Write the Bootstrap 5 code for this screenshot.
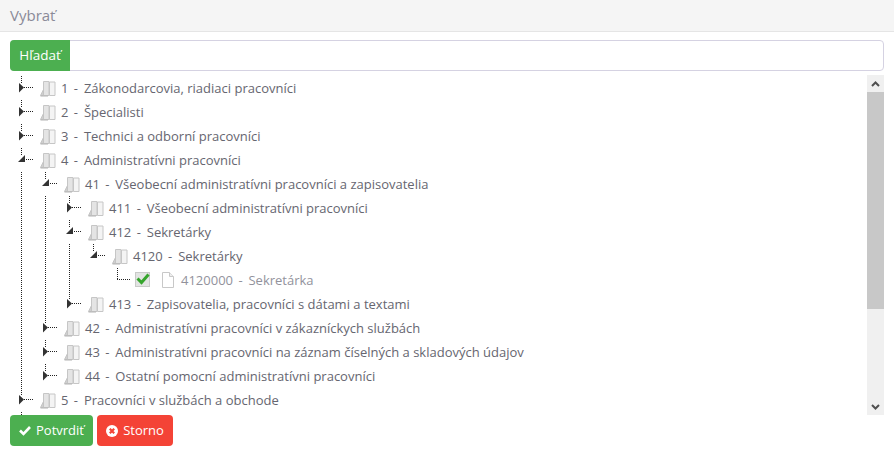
<!DOCTYPE html>
<html lang="sk"><head><meta charset="utf-8"><title>Vybrať</title>
<link href="https://cdn.jsdelivr.net/npm/bootstrap@5.3.0/dist/css/bootstrap.min.css" rel="stylesheet">
<style>
html,body{height:451px;overflow:hidden;background:#fff}
body{font-family:"Open Sans",sans-serif;font-size:13px;color:#666670}
.dlg-head{height:32px;background:#f5f5f5;border-bottom:1px solid #e5e5e5;padding-left:10px;font-size:15px;line-height:30px;color:#8a8a98}
.dlg-body{padding:8px 10px 0}
.srch{height:31px;border:1px solid #d5d2e2;border-radius:4px}
.srch .btn{width:60px;height:31px;margin:-1px 0 0 -1px;border:0;padding:0;background:#4caf50;color:#fff;font-size:13.5px;border-radius:4px 0 0 4px}
.srch input{border:0;outline:0;flex:1;background:transparent;min-width:0}
.tree-wrap{height:340px;margin-top:4px}
.tree-list{height:340px;overflow:hidden;padding-top:1px}
.tr-row{height:24px;line-height:24px;white-space:pre}
.ind{width:24px;flex:none;height:24px}
.ind-on{background:repeating-linear-gradient(#222 0 1px,transparent 1px 2px) 11px 0/1px 100% no-repeat}
.tr-svg{display:block;flex:none}
.ic-book{margin-left:6px;margin-right:5px}
.ic-chk{margin-left:5px;margin-right:10px}
.ic-doc{margin-right:6px}
.lbl-leaf{color:#92929c}
.dash{margin:0 2.5px 0 2px}
.sbar{width:17px;flex:none;background:#f0f0f0;height:340px}
.sbtn{height:17px;display:flex;align-items:center;justify-content:center}
.sthumb{height:217px;background:#c8c8c8}
.sgap{flex:1}
.act{gap:4px;height:31px}
.act .btn{height:31px;padding:0;border:0;font-size:13px;color:#fff;border-radius:4px;display:flex;align-items:center;justify-content:center;gap:5px}
.b-ok{width:83px;background:#4caf50}
.b-no{width:76px;background:#f44336}
</style></head>
<body>
<div class="dlg-head">Vybrať</div>
<div class="dlg-body">
<div class="srch d-flex"><button type="button" class="btn">Hľadať</button><input type="text" aria-label="Hľadať"></div>
<div class="tree-wrap d-flex">
<div class="tree-list flex-grow-1" id="t"></div>
<div class="sbar d-flex flex-column">
<div class="sbtn"><svg width="9" height="6" viewBox="0 0 9 6"><path d="M1 5l3.500-3.500L8 5" fill="none" stroke="#505050" stroke-width="2"/></svg></div>
<div class="sthumb"></div><div class="sgap"></div>
<div class="sbtn"><svg width="9" height="6" viewBox="0 0 9 6"><path d="M1 1l3.500 3.500L8 1" fill="none" stroke="#505050" stroke-width="2"/></svg></div>
</div>
</div>
<div class="act d-flex">
<button type="button" class="btn b-ok"><svg width="12" height="11" viewBox="0 0 12 11"><path d="M1 5.500l3.500 3.500 6.500-7" fill="none" stroke="#fff" stroke-width="2.600"/></svg>Potvrdiť</button>
<button type="button" class="btn b-no"><svg width="12" height="12" viewBox="0 0 12 12"><circle cx="6" cy="6" r="6" fill="#fff"/><path d="M3.800 3.800l4.400 4.400M8.200 3.800l-4.400 4.400" stroke="#f44336" stroke-width="2.200"/></svg>Storno</button>
</div>
</div>
<script>
var rows=[
[0,'c','1 - Zákonodarcovia, riadiaci pracovníci',[]],
[0,'c','2 - Špecialisti',[]],
[0,'c','3 - Technici a odborní pracovníci',[]],
[0,'o','4 - Administratívni pracovníci',[]],
[1,'o','41 - Všeobecní administratívni pracovníci a zapisovatelia',[0]],
[2,'c','411 - Všeobecní administratívni pracovníci',[0,1]],
[2,'o','412 - Sekretárky',[0,1]],
[3,'o','4120 - Sekretárky',[0,1,2]],
[4,'l','4120000 - Sekretárka',[0,1,2]],
[2,'c','413 - Zapisovatelia, pracovníci s dátami a textami',[0,1]],
[1,'c','42 - Administratívni pracovníci v zákazníckych službách',[0]],
[1,'c','43 - Administratívni pracovníci na záznam číselných a skladových údajov',[0]],
[1,'c','44 - Ostatní pomocní administratívni pracovníci',[0]],
[0,'c','5 - Pracovníci v službách a obchode',[]],
[0,'c','',[]]];
function dots(x1,y1,x2,y2){return '<path d="M'+x1+' '+y1+'L'+x2+' '+y2+'" stroke="#222" stroke-dasharray="1 1" fill="none" shape-rendering="crispEdges"/>'}
var book='<svg class="tr-svg ic-book" width="16" height="17" viewBox="0 0 16 17"><path d="M3.500 1.500h5.500v14H3.500z" fill="#e4e4e4" stroke="#c6c6c6"/><path d="M9.500 2h5.500v13.500H9.500z" fill="#f4f4f4" stroke="#c6c6c6"/><path d="M0.500 15.500L3.500 9.500v6z" fill="#cfcfcf" stroke="#c4c4c4"/><path d="M0.500 16H8" stroke="#b4b4b4"/></svg>';
var doc='<svg class="tr-svg ic-doc" width="14" height="18" viewBox="0 0 14 18"><path d="M1.500 1.500h7l4 4v11h-11z" fill="#fff" stroke="#c8c8c8"/><path d="M8.500 1.500v4h4" fill="#eee" stroke="#c8c8c8"/></svg>';
var chk='<svg class="tr-svg ic-chk" width="16" height="16" viewBox="0 0 16 16"><rect x="0.500" y="0.500" width="14" height="14" fill="#e2e4e2" stroke="#c8cac8"/><path d="M2.500 6.500l4 4 7-8" fill="none" stroke="#35a52c" stroke-width="3"/></svg>';
function conn(k){
 var s='<svg class="tr-svg" width="24" height="24" viewBox="0 0 24 24">';
 if(k=='l'){s+=dots(11.5,0,11.5,12)+dots(11,11.5,24,11.5)}
 else{s+=dots(11.5,0,11.5,8)+dots(14,11.5,24,11.5);
  s+=k=='c'?'<path d="M9 7l5 4.500-5 5z" fill="#333"/>':'<path d="M15 7v7H8z" fill="#333"/>'}
 return s+'</svg>'}
function txt(t){var p=t.split(' - ');return p[0]+' <span class="dash">-</span> '+p[1]}
document.getElementById('t').innerHTML=rows.map(function(r){
 var h='';for(var i=0;i<r[0];i++){h+='<span class="ind'+(r[3].indexOf(i)>=0?' ind-on':'')+'"></span>'}
 h+=conn(r[1]);
 if(r[2]===''){return '<div class="tr-row d-flex">'+h+'</div>'}
 if(r[1]=='l'){h+=chk+doc+'<span class="lbl-leaf">'+txt(r[2])+'</span>'}
 else{h+=book+'<span>'+txt(r[2])+'</span>'}
 return '<div class="tr-row d-flex align-items-center">'+h+'</div>'}).join('');
</script>
<script src="https://cdn.jsdelivr.net/npm/bootstrap@5.3.0/dist/js/bootstrap.bundle.min.js"></script>
</body></html>
